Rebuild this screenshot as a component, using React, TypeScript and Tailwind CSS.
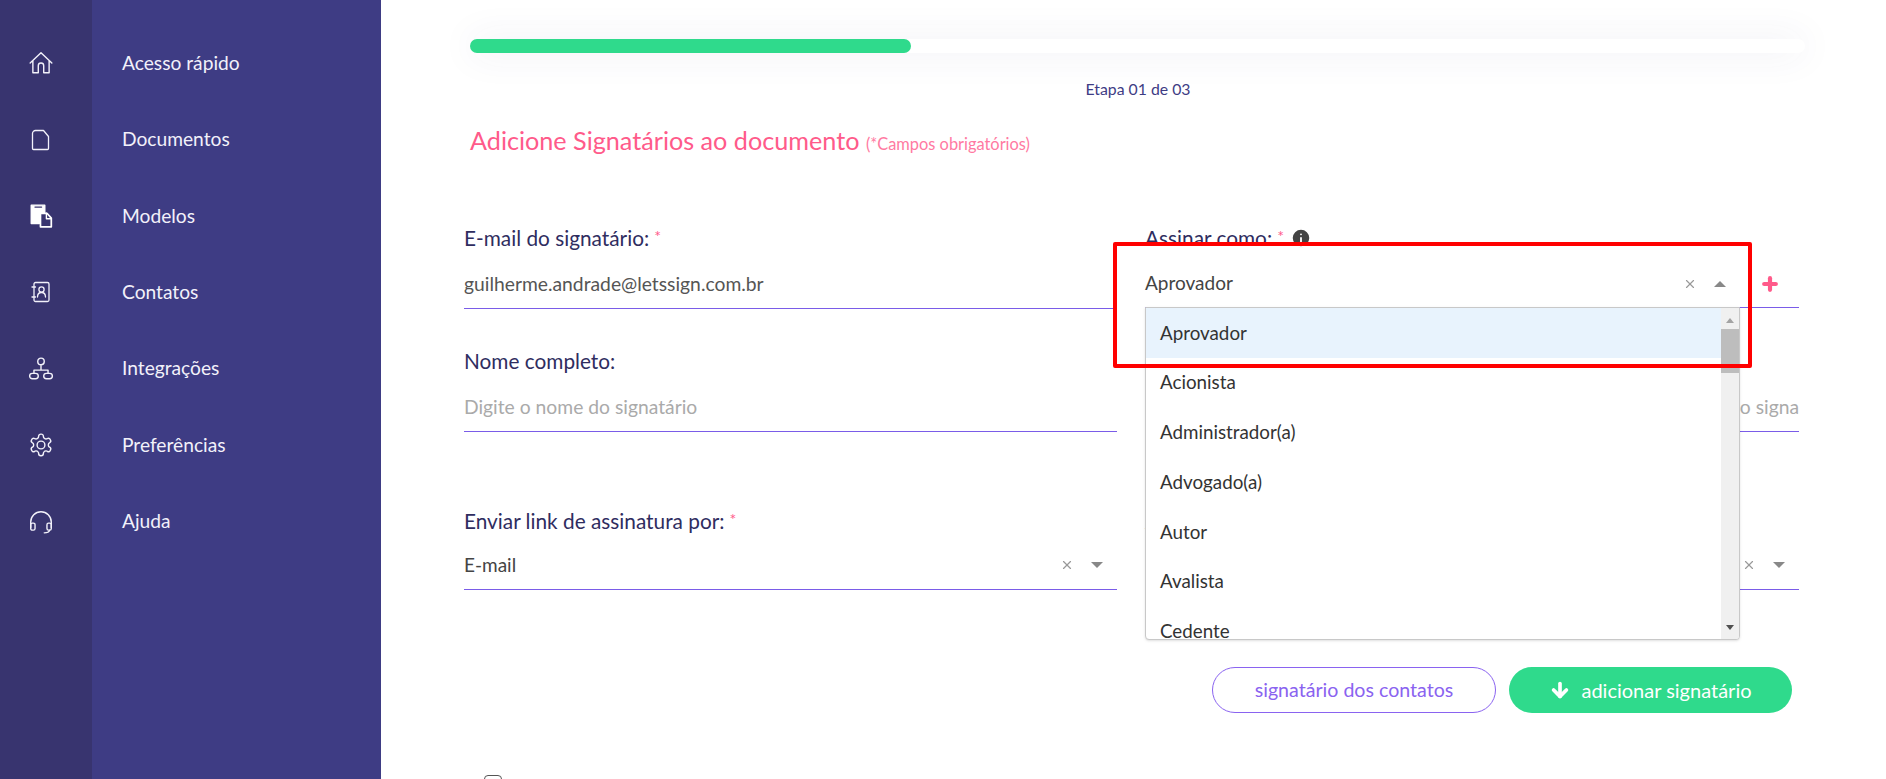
import { ArrowDown, Info, Plus, X } from "lucide-react";

const font = "font-['Lato',sans-serif]";

function NavIcon({ name }: { name: string }) {
  const size = name === "doc" || name === "contacts" ? 24 : 26;
  const common = {
    width: size,
    height: size,
    viewBox: "0 0 24 24",
    fill: "none",
    stroke: "#f2f1fa",
    strokeWidth: 1.3,
    strokeLinecap: "round" as const,
    strokeLinejoin: "round" as const,
  };
  switch (name) {
    case "home":
      return (
        <svg {...common}>
          <path d="M2 12 12 2.5 22 12M4.5 10v11h5v-6.5a2.5 2.5 0 0 1 5 0V21h5V10" />
        </svg>
      );
    case "doc":
      return (
        <svg {...common}>
          <path d="M7 2.5h8l5 6v12a1 1 0 0 1-1 1H5a1 1 0 0 1-1-1v-15a3 3 0 0 1 3-3Z" transform="translate(-.5 0)" />
        </svg>
      );
    case "models":
      return (
        <svg {...common}>
          <path d="M3 2h12.5v7H10.5v10H3Z" fill="#fff" stroke="#fff" />
          <path d="M6.5 3.8h6" stroke="#38346f" />
          <path d="M11.5 9.5h6l4 4.5v8h-10Z" fill="#38346f" stroke="#fff" strokeWidth={1.6} />
          <path d="M17 9.5v5h4.5" stroke="#fff" />
        </svg>
      );
    case "contacts":
      return (
        <svg {...common}>
          <rect x="5" y="2.5" width="15" height="19" rx="1.5" />
          <circle cx="12.5" cy="9.5" r="2.6" />
          <path d="M8.5 17c0-3 1.6-4.5 4-4.5s4 1.5 4 4.5M3 7h3.5M3 17h3.5" />
        </svg>
      );
    case "network":
      return (
        <svg {...common}>
          <circle cx="12" cy="5" r="3" />
          <path d="M12 8v5M5.5 16v-3h13v3" />
          <rect x="1.5" y="16" width="8" height="5" rx="2.5" />
          <rect x="14.5" y="16" width="8" height="5" rx="2.5" />
        </svg>
      );
    case "gear":
      return (
        <svg {...common}>
          <path d="M12.2 2h-.4a2 2 0 0 0-2 2v.2a2 2 0 0 1-1 1.7l-.4.3a2 2 0 0 1-2 0l-.2-.1a2 2 0 0 0-2.7.7l-.2.4a2 2 0 0 0 .7 2.7l.2.1a2 2 0 0 1 1 1.7v.5a2 2 0 0 1-1 1.7l-.2.1a2 2 0 0 0-.7 2.7l.2.4a2 2 0 0 0 2.7.7l.2-.1a2 2 0 0 1 2 0l.4.3a2 2 0 0 1 1 1.7v.2a2 2 0 0 0 2 2h.4a2 2 0 0 0 2-2v-.2a2 2 0 0 1 1-1.7l.4-.3a2 2 0 0 1 2 0l.2.1a2 2 0 0 0 2.7-.7l.2-.4a2 2 0 0 0-.7-2.7l-.2-.1a2 2 0 0 1-1-1.7v-.5a2 2 0 0 1 1-1.7l.2-.1a2 2 0 0 0 .7-2.7l-.2-.4a2 2 0 0 0-2.7-.7l-.2.1a2 2 0 0 1-2 0l-.4-.3a2 2 0 0 1-1-1.7V4a2 2 0 0 0-2-2Z" />
          <circle cx="12" cy="12" r="3.6" />
        </svg>
      );
    default:
      return (
        <svg {...common}>
          <path d="M2.5 17v-5a9.5 9.5 0 0 1 19 0v5" />
          <rect x="2.5" y="13" width="4" height="6.5" rx="1.5" />
          <rect x="17.5" y="13" width="4" height="6.5" rx="1.5" />
          <path d="M20 19.5c-.5 1.8-2.5 2.5-5 2.5" />
        </svg>
      );
  }
}

const navItems = [
  { icon: "home", label: "Acesso rápido" },
  { icon: "doc", label: "Documentos" },
  { icon: "models", label: "Modelos" },
  { icon: "contacts", label: "Contatos" },
  { icon: "network", label: "Integrações" },
  { icon: "gear", label: "Preferências" },
  { icon: "headset", label: "Ajuda" },
];

const options = ["Aprovador", "Acionista", "Administrador(a)", "Advogado(a)", "Autor", "Avalista", "Cedente"];

function Caret({ up }: { up?: boolean }) {
  return (
    <span
      className={
        up
          ? "h-0 w-0 border-x-[6px] border-b-[6px] border-x-transparent border-b-[#888888]"
          : "h-0 w-0 border-x-[6px] border-t-[6px] border-x-transparent border-t-[#888888]"
      }
    />
  );
}

function Label({ text, required }: { text: string; required?: boolean }) {
  return (
    <div className="flex h-[24px] items-center gap-[5px] text-[20.8px] text-[#2f2d5f]">
      {text}
      {required && <span className="mb-1 text-[16px] text-[#ff5a8a]">*</span>}
    </div>
  );
}

function Sidebar() {
  return (
    <aside className="flex h-[779px] w-[381px] shrink-0 bg-[#3e3c84]">
      <div className="flex w-[92px] flex-col items-center bg-[#38346f] pr-[10px] pt-[25px]">
        {navItems.map((item) => (
          <div key={item.icon} className="flex h-[76.4px] items-center justify-center">
            <NavIcon name={item.icon} />
          </div>
        ))}
      </div>
      <div className="flex flex-col pl-[30px] pt-[25px]">
        {navItems.map((item) => (
          <div key={item.icon} className="flex h-[76.4px] items-center text-[19.2px] text-[#f2f1fa]">
            {item.label}
          </div>
        ))}
      </div>
    </aside>
  );
}

export default function App() {
  return (
    <div className={`flex h-[779px] w-[1886px] overflow-hidden bg-white ${font}`}>
      <Sidebar />

      <main className="relative flex-1 pl-[83px] pr-[86px]">
        {/* Progress */}
        <div className="ml-[6px] mr-[-5px] mt-[39px] h-[14px] rounded-full bg-white shadow-[0_0_36px_rgba(60,60,120,0.1)]">
          <div className="h-[14px] w-[441px] rounded-full bg-[#2fda8c]" />
        </div>
        <p className="ml-[12px] mt-[27px] text-center text-[15.8px] leading-[18px] text-[#3e3c84]">Etapa 01 de 03</p>

        <h1 className="ml-[6px] mt-[27px] text-[25.2px] leading-[30px] text-[#ff5a8a]">
          Adicione Signatários ao documento{" "}
          <span className="text-[16.4px] text-[#ff7aa2]">(*Campos obrigatórios)</span>
        </h1>

        {/* Form */}
        <div className="mt-[67px] grid grid-cols-[653px_654px] gap-x-[28px]">
          <div>
            <Label text="E-mail do signatário:" required />
            <div className="mt-[14px] flex h-[45px] items-center border-b border-[#7a5ce8] pb-1 text-[19.3px] text-[#555555]">
              guilherme.andrade@letssign.com.br
            </div>
          </div>
          <div>
            <div className="flex items-center gap-[6px]">
              <Label text="Assinar como:" required />
              <Info className="h-[22px] w-[22px] fill-[#444444] text-white" />
            </div>
            <div className="mt-[14px] flex h-[44px] items-center border-b border-[#7a5ce8] pb-1 text-[19px] text-[#444444]">
              <span className="flex-1">Aprovador</span>
              <X className="mr-[17px] h-[14px] w-[14px] text-[#999999]" />
              <Caret up />
              <Plus className="ml-[34px] mr-[19px] h-[20px] w-[20px] text-[#ff5a8a]" strokeWidth={5} />
            </div>
          </div>

          <div className="mt-[40px]">
            <Label text="Nome completo:" />
            <div className="mt-[14px] flex h-[45px] items-center border-b border-[#7a5ce8] pb-1 text-[19.3px] text-[#aaaaaa]">
              Digite o nome do signatário
            </div>
          </div>
          <div className="mt-[40px]">
            <Label text="CPF:" />
            <div className="mt-[14px] flex h-[45px] items-center justify-end overflow-hidden whitespace-nowrap border-b border-[#7a5ce8] pb-1 text-[19.3px] text-[#aaaaaa]">
              Digite o CPF do signa
            </div>
          </div>

          <div className="mt-[77px]">
            <Label text="Enviar link de assinatura por:" required />
            <div className="mt-[12px] flex h-[45px] items-center border-b border-[#7a5ce8] pb-1 text-[19px] text-[#444444]">
              <span className="flex-1">E-mail</span>
              <X className="mr-[17px] h-[14px] w-[14px] text-[#999999]" />
              <Caret />
              <span className="w-[14px]" />
            </div>
          </div>
          <div className="mt-[77px]">
            <Label text="Autenticação:" />
            <div className="mt-[12px] flex h-[45px] items-center border-b border-[#7a5ce8] pb-1 text-[19px] text-[#444444]">
              <span className="flex-1" />
              <X className="mr-[17px] h-[14px] w-[14px] text-[#999999]" />
              <Caret />
              <span className="w-[14px]" />
            </div>
          </div>
        </div>

        <div className="mt-[77px] flex justify-end gap-[13px] pr-[8px]">
          <button className="h-[46px] w-[284px] rounded-full border border-[#8a63f0] text-[19.6px] text-[#8a63f0]">
            signatário dos contatos
          </button>
          <button className="flex h-[46px] w-[283px] items-center justify-center gap-[10px] rounded-full bg-[#2fda8c] text-[20px] text-white">
            <ArrowDown className="h-[22px] w-[22px]" strokeWidth={4} />
            adicionar signatário
          </button>
        </div>

        <div className="ml-[20px] mt-[62px] h-[18px] w-[18px] rounded-[4px] border border-[#555555]" />

        {/* Open dropdown */}
        <div className="absolute left-[764px] top-[307px] flex h-[333px] w-[595px] overflow-hidden rounded-b-[4px] border border-[#c8c8c8] bg-white shadow-sm">
          <ul className="flex-1 overflow-hidden">
            {options.map((option, i) => (
              <li
                key={option}
                className={`flex h-[49.7px] shrink-0 items-center px-[14px] text-[18.8px] text-[#333333] ${i === 0 ? "bg-[#e8f3fd]" : ""}`}
              >
                {option}
              </li>
            ))}
          </ul>
          <div className="flex w-[18px] flex-col items-center bg-[#f0f0f0]">
            <span className="mt-[10px] h-0 w-0 border-x-[4px] border-b-[5px] border-x-transparent border-b-[#a3a3a3]" />
            <div className="mt-[6px] h-[44px] w-full bg-[#bdbdbd]" />
            <span className="mb-[9px] mt-auto h-0 w-0 border-x-[4px] border-t-[5px] border-x-transparent border-t-[#505050]" />
          </div>
        </div>

        {/* Highlight box */}
        <div className="absolute left-[732px] top-[242px] h-[126px] w-[639px] rounded-[2px] border-[4px] border-[#ff0000]" />
      </main>
    </div>
  );
}
